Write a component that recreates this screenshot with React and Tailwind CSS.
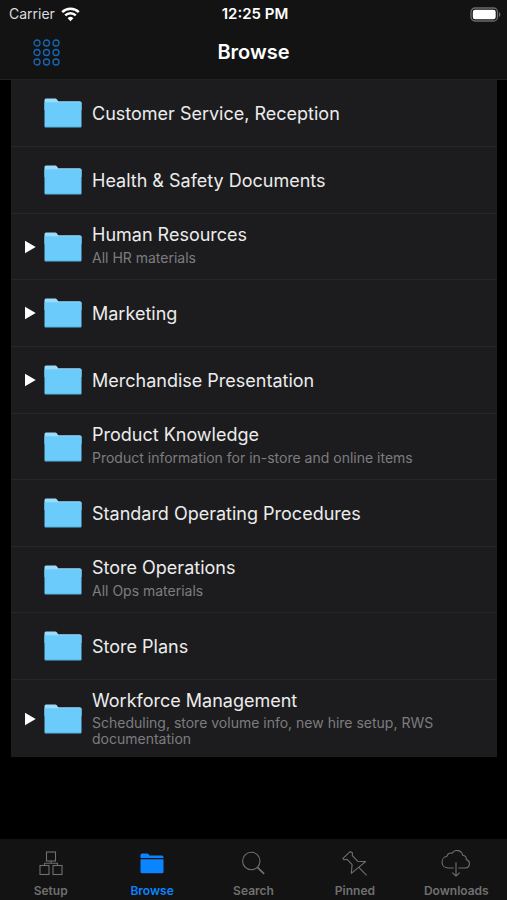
import React, { useState } from "react";
import clsx from "clsx";

const folders = [
  { name: "Customer Service, Reception" },
  { name: "Health & Safety Documents" },
  { name: "Human Resources", description: "All HR materials", expandable: true },
  { name: "Marketing", expandable: true },
  { name: "Merchandise Presentation", expandable: true },
  {
    name: "Product Knowledge",
    description: "Product information for in-store and online items"
  },
  { name: "Standard Operating Procedures" },
  { name: "Store Operations", description: "All Ops materials" },
  { name: "Store Plans" },
  {
    name: "Workforce Management",
    description: "Scheduling, store volume info, new hire setup, RWS documentation",
    expandable: true,
    multiline: true
  }
];

const WifiIcon = () => (
  <svg width="19" height="15" viewBox="0 0 19 15" fill="none" aria-hidden="true">
    <path d="M1.2 5.1a11.8 11.8 0 0 1 16.6 0" stroke="white" strokeWidth="2.4" />
    <path d="M4.2 8.4a7.5 7.5 0 0 1 10.6 0" stroke="white" strokeWidth="2.4" />
    <path d="M9.5 14.2 6.6 11.2a4.1 4.1 0 0 1 5.8 0z" fill="white" />
  </svg>
);

const BatteryIcon = () => (
  <svg width="31" height="15" viewBox="0 0 31 15" fill="none" aria-hidden="true">
    <rect x="1" y="1" width="26.5" height="13" rx="4" stroke="#6b6b6b" strokeWidth="1.3" />
    <rect x="2.8" y="2.8" width="22.9" height="9.4" rx="2.2" fill="white" />
    <path d="M29 5.2c1.8.7 1.8 4 0 4.7z" fill="#6b6b6b" />
  </svg>
);

const GridIcon = () => (
  <svg width="28" height="28" viewBox="0 0 28 28" fill="none" stroke="#1767b8" strokeWidth="1.3" aria-hidden="true">
    {[5, 14.5, 24].map((cy) =>
      [5, 14.5, 24].map((cx) => <circle key={`${cx}-${cy}`} cx={cx} cy={cy} r="3" />)
    )}
  </svg>
);

const FolderIcon = () => (
  <svg width="38" height="30" viewBox="0 0 38 30" aria-hidden="true">
    <path d="M.5 2Q.5.5 2 .5h9.2q1 0 1.6.8l1.4 2h21.6q1.7 0 1.7 1.5V12H.5z" fill="#9bdcfa" />
    <path d="M.5 4.3h37v24q0 1-1 1h-35q-1 0-1-1z" fill="#6bcbfa" />
    <path d="M.8 28.9h36.4" stroke="#4fb2e4" strokeWidth=".8" />
  </svg>
);

const SetupIcon = () => (
  <svg width="28" height="28" viewBox="0 0 28 28" fill="none" stroke="currentColor" strokeWidth="1.1" aria-hidden="true">
    <rect x="9.5" y="3" width="9" height="9" />
    <rect x="3" y="16.5" width="9" height="9" />
    <rect x="16" y="16.5" width="9" height="9" />
    <path d="M14 12v2.3M7.5 16.5v-2.2h13v2.2" />
  </svg>
);

const BrowseIcon = () => (
  <svg width="28" height="28" viewBox="0 0 28 28" fill="currentColor" aria-hidden="true">
    <path d="M2.5 9.1V6q0-1.6 1.6-1.6h5.3q.8 0 1.2.7l.8 1.4h12.4q1.7 0 1.7 1.6v1z" />
    <path d="M2.5 10.3h23v12.4q0 1.6-1.6 1.6H4.1q-1.6 0-1.6-1.6z" />
  </svg>
);

const SearchIcon = () => (
  <svg width="28" height="28" viewBox="0 0 28 28" fill="none" stroke="currentColor" strokeWidth="1.1" aria-hidden="true">
    <circle cx="12.3" cy="12" r="8.7" />
    <path d="m18.5 18.3 6.6 6.6" strokeWidth="1.7" />
  </svg>
);

const PinIcon = () => (
  <svg width="28" height="28" viewBox="0 0 28 28" fill="none" stroke="currentColor" strokeWidth="1.1" strokeLinejoin="round" aria-hidden="true">
    <path d="M9.2 2.6 1.9 9.4l1.3 1.4 2.9-.5 5 5.3-.8 8.8L24.6 12.6l-8-.4-5.3-5.5.2-2.8z" />
    <path d="m17.6 18.2 8 8.2" />
  </svg>
);

const DownloadIcon = () => (
  <svg width="32" height="28" viewBox="0 0 32 28" fill="none" stroke="currentColor" strokeWidth="1.1" strokeLinejoin="round" aria-hidden="true">
    <path d="M13.7 19H7.9a5.9 5.9 0 0 1-1-11.7c.5-2.7 3-3.9 5.3-3C14.8-.1 21.700 1 22.700 6.300c2.700.3 3.900 2.200 3.600 4.300a4.300 4.300 0 0 1-.7 8.400h-7.300" />
    <path d="M16 13.300v13.500M12.300 23.700l3.700 3.400 3.700-3.400" />
  </svg>
);

const tabs = [
  { id: "setup", label: "Setup", icon: SetupIcon },
  { id: "browse", label: "Browse", icon: BrowseIcon },
  { id: "search", label: "Search", icon: SearchIcon },
  { id: "pinned", label: "Pinned", icon: PinIcon },
  { id: "downloads", label: "Downloads", icon: DownloadIcon }
];

const FolderRow = ({ folder }) => (
  <li className="border-b border-[#272729] last:border-b-0">
    <button
      type="button"
      className={clsx(
        "flex w-full items-center pl-[13px] pr-14 text-left",
        !folder.description && "h-[66px]"
      )}
    >
      <span className="w-5 shrink-0">
        {folder.expandable && (
          <svg width="12" height="14" viewBox="0 0 12 14" fill="white" aria-hidden="true">
            <path d="M1 .8 11.700 7 1 13.200z" />
          </svg>
        )}
      </span>
      <span className="shrink-0">
        <FolderIcon />
      </span>
      <span
        className={clsx(
          "ml-[10px] flex min-w-0 flex-col",
          !folder.description && "pt-0.5",
          folder.description && "pt-[9px]",
          folder.description && (folder.multiline ? "gap-0.5 pb-[10px]" : "gap-[3px] pb-[13px]")
        )}
      >
        <span className="text-lg leading-6 text-[#ececec]">{folder.name}</span>
        {folder.description && (
          <span className="text-sm leading-4 text-[#7c7c7e]">{folder.description}</span>
        )}
      </span>
    </button>
  </li>
);

const App = () => {
  const [activeTab, setActiveTab] = useState("browse");

  return (
    <div className="flex min-h-screen flex-col bg-black font-['Inter',sans-serif]">
      <header className="border-b border-[#202021] bg-[#131313] text-white">
        {/* Status bar */}
        <div className="grid h-7 grid-cols-3 items-center pr-[6px] pl-[9px]">
          <div className="flex items-center gap-[6px] text-sm text-[#dcdcdc]">
            Carrier
            <WifiIcon />
          </div>
          <div className="text-center text-[15px] leading-5 font-semibold">12:25 PM</div>
          <div className="flex justify-end">
            <BatteryIcon />
          </div>
        </div>

        {/* Navigation bar */}
        <div className="grid h-[51px] grid-cols-3 items-start px-8 pt-[10px]">
          <button type="button" aria-label="Menu" className="w-7">
            <GridIcon />
          </button>
          <h1 className="text-center text-xl leading-7 font-semibold">Browse</h1>
        </div>
      </header>

      <main className="flex-1 pr-[10px] pl-[11px]">
        <ul className="bg-[#1c1c1e]">
          {folders.map((folder) => (
            <FolderRow key={folder.name} folder={folder} />
          ))}
        </ul>
      </main>

      {/* Tab bar */}
      <nav className="grid grid-cols-5 bg-[#131313] pt-[10px]">
        {tabs.map(({ id, label, icon: Icon }) => (
          <button
            key={id}
            type="button"
            onClick={() => setActiveTab(id)}
            className={clsx(
              "flex flex-col items-center gap-[5px] text-xs font-semibold",
              activeTab === id ? "text-[#0a84ff]" : "text-[#707070]"
            )}
          >
            <Icon />
            <span className="leading-[18px]">{label}</span>
          </button>
        ))}
      </nav>
    </div>
  );
};

export default App;
